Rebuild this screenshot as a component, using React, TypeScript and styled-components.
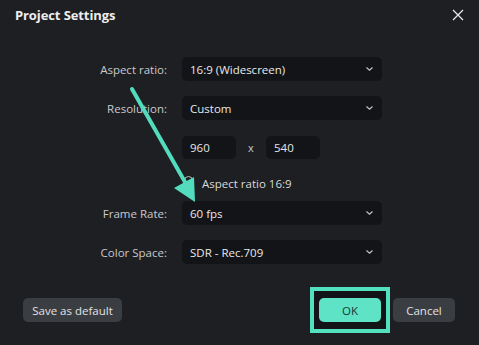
import React from "react";
import styled, { createGlobalStyle } from "styled-components";

const Global = createGlobalStyle`
  html, body { margin: 0; padding: 0; background: #1d1f23; }
  * { box-sizing: border-box; }
`;

const Dialog = styled.div`
  position: relative;
  width: 479px;
  height: 345px;
  background: #1d1f23;
  font-family: "Open Sans", "Noto Sans", sans-serif;
  color: #d6d7d9;
  overflow: hidden;
`;

const Header = styled.div`
  display: flex;
  align-items: center;
  justify-content: space-between;
  height: 29px;
  padding: 0 14px 0 15px;
`;

const Title = styled.div`
  font-size: 13px;
  font-weight: 700;
  color: #eeeeee;
  letter-spacing: -0.1px;
`;

const Close = styled.button`
  width: 14px;
  height: 14px;
  padding: 0;
  border: none;
  background: transparent;
  display: flex;
  align-items: center;
  justify-content: center;
`;

const Form = styled.div`
  display: grid;
  grid-template-columns: 167px 200px;
  column-gap: 15px;
  align-items: center;
  margin-top: 28px;
`;

const Label = styled.div<{ $mt?: number }>`
  text-align: right;
  font-size: 11.5px;
  color: #c9cacc;
  margin-top: ${(p) => p.$mt ?? 0}px;
`;

const Field = styled.div<{ $mt?: number }>`
  margin-top: ${(p) => p.$mt ?? 0}px;
`;

const Select = styled.div`
  height: 24px;
  border-radius: 5px;
  background: #131417;
  display: flex;
  align-items: center;
  justify-content: space-between;
  padding: 0 8px 0 8px;
  font-size: 11.5px;
  color: #e8e9ea;
`;

const SizeRow = styled.div`
  display: flex;
  align-items: center;
`;

const NumInput = styled.div`
  width: 54px;
  height: 23px;
  border-radius: 5px;
  background: #131417;
  display: flex;
  align-items: center;
  padding-left: 8px;
  font-size: 11.5px;
  color: #e4e5e6;
`;

const Times = styled.span`
  width: 30px;
  text-align: center;
  font-size: 11px;
  color: #c9cacc;
`;

const CheckRow = styled.div`
  display: flex;
  align-items: center;
  height: 20px;
  font-size: 11.5px;
  color: #d9dadb;
`;

const Radio = styled.span`
  width: 9px;
  height: 9px;
  border-radius: 50%;
  border: 1.5px solid #b9babc;
  margin: 0 10px 0 1px;
  transform: translate(1px, -3px);
`;

const Footer = styled.div`
  position: absolute;
  left: 23px;
  right: 24px;
  top: 298px;
  display: flex;
  align-items: center;
`;

const Button = styled.button<{ $primary?: boolean; $w: number }>`
  width: ${(p) => p.$w}px;
  height: 24px;
  border: none;
  border-radius: 5px;
  background: ${(p) => (p.$primary ? "#5ee3c6" : "#3a3d42")};
  color: ${(p) => (p.$primary ? "#1a3a33" : "#e2e3e4")};
  font-family: "Open Sans", "Noto Sans", sans-serif;
  font-size: 11.5px;
  padding: 0;
  position: relative;
  z-index: 1;
`;

const Spacer = styled.div`
  flex: 1;
`;

const Highlight = styled.div`
  position: relative;
  margin-right: 12px;
  display: flex;
  &::before {
    content: "";
    position: absolute;
    left: -9px;
    right: -9px;
    top: -11px;
    bottom: -11px;
    border: 4px solid #52e0bf;
    background: #121417;
  }
`;

const ArrowOverlay = styled.svg`
  position: absolute;
  left: 0;
  top: 0;
  pointer-events: none;
`;

const Chevron = () => (
  <svg width="9" height="6" viewBox="0 0 9 6">
    <path d="M1.5 1.5 L4.5 4.3 L7.5 1.5" stroke="#c4c5c7" strokeWidth="1.2" fill="none" />
  </svg>
);

export default function App() {
  return (
    <>
      <Global />
      <Dialog>
        <Header>
          <Title>Project Settings</Title>
          <Close aria-label="close">
            <svg width="12" height="12" viewBox="0 0 12 12">
              <path d="M1 1 L11 11 M11 1 L1 11" stroke="#e8e8e8" strokeWidth="1.3" />
            </svg>
          </Close>
        </Header>
        <Form>
          <Label>Aspect ratio:</Label>
          <Field>
            <Select>
              <span>16:9 (Widescreen)</span>
              <Chevron />
            </Select>
          </Field>
          <Label $mt={15}>Resolution:</Label>
          <Field $mt={15}>
            <Select>
              <span>Custom</span>
              <Chevron />
            </Select>
          </Field>
          <Label $mt={16} />
          <Field $mt={16}>
            <SizeRow>
              <NumInput>960</NumInput>
              <Times>x</Times>
              <NumInput>540</NumInput>
            </SizeRow>
          </Field>
          <Label $mt={14} />
          <Field $mt={14}>
            <CheckRow>
              <Radio />
              Aspect ratio 16:9
            </CheckRow>
          </Field>
          <Label $mt={8}>Frame Rate:</Label>
          <Field $mt={8}>
            <Select>
              <span>60 fps</span>
              <Chevron />
            </Select>
          </Field>
          <Label $mt={15}>Color Space:</Label>
          <Field $mt={15}>
            <Select>
              <span>SDR - Rec.709</span>
              <Chevron />
            </Select>
          </Field>
        </Form>
        <Footer>
          <Button $w={99}>Save as default</Button>
          <Spacer />
          <Highlight>
            <Button $primary $w={62}>OK</Button>
          </Highlight>
          <Button $w={62}>Cancel</Button>
        </Footer>
        <ArrowOverlay width="479" height="345" viewBox="0 0 479 345">
          <line x1="132" y1="89" x2="185" y2="182" stroke="#52dcbd" strokeWidth="4" strokeLinecap="round" />
          <polygon points="195,202 174,188 194,177" fill="#52dcbd" />
        </ArrowOverlay>
      </Dialog>
    </>
  );
}
